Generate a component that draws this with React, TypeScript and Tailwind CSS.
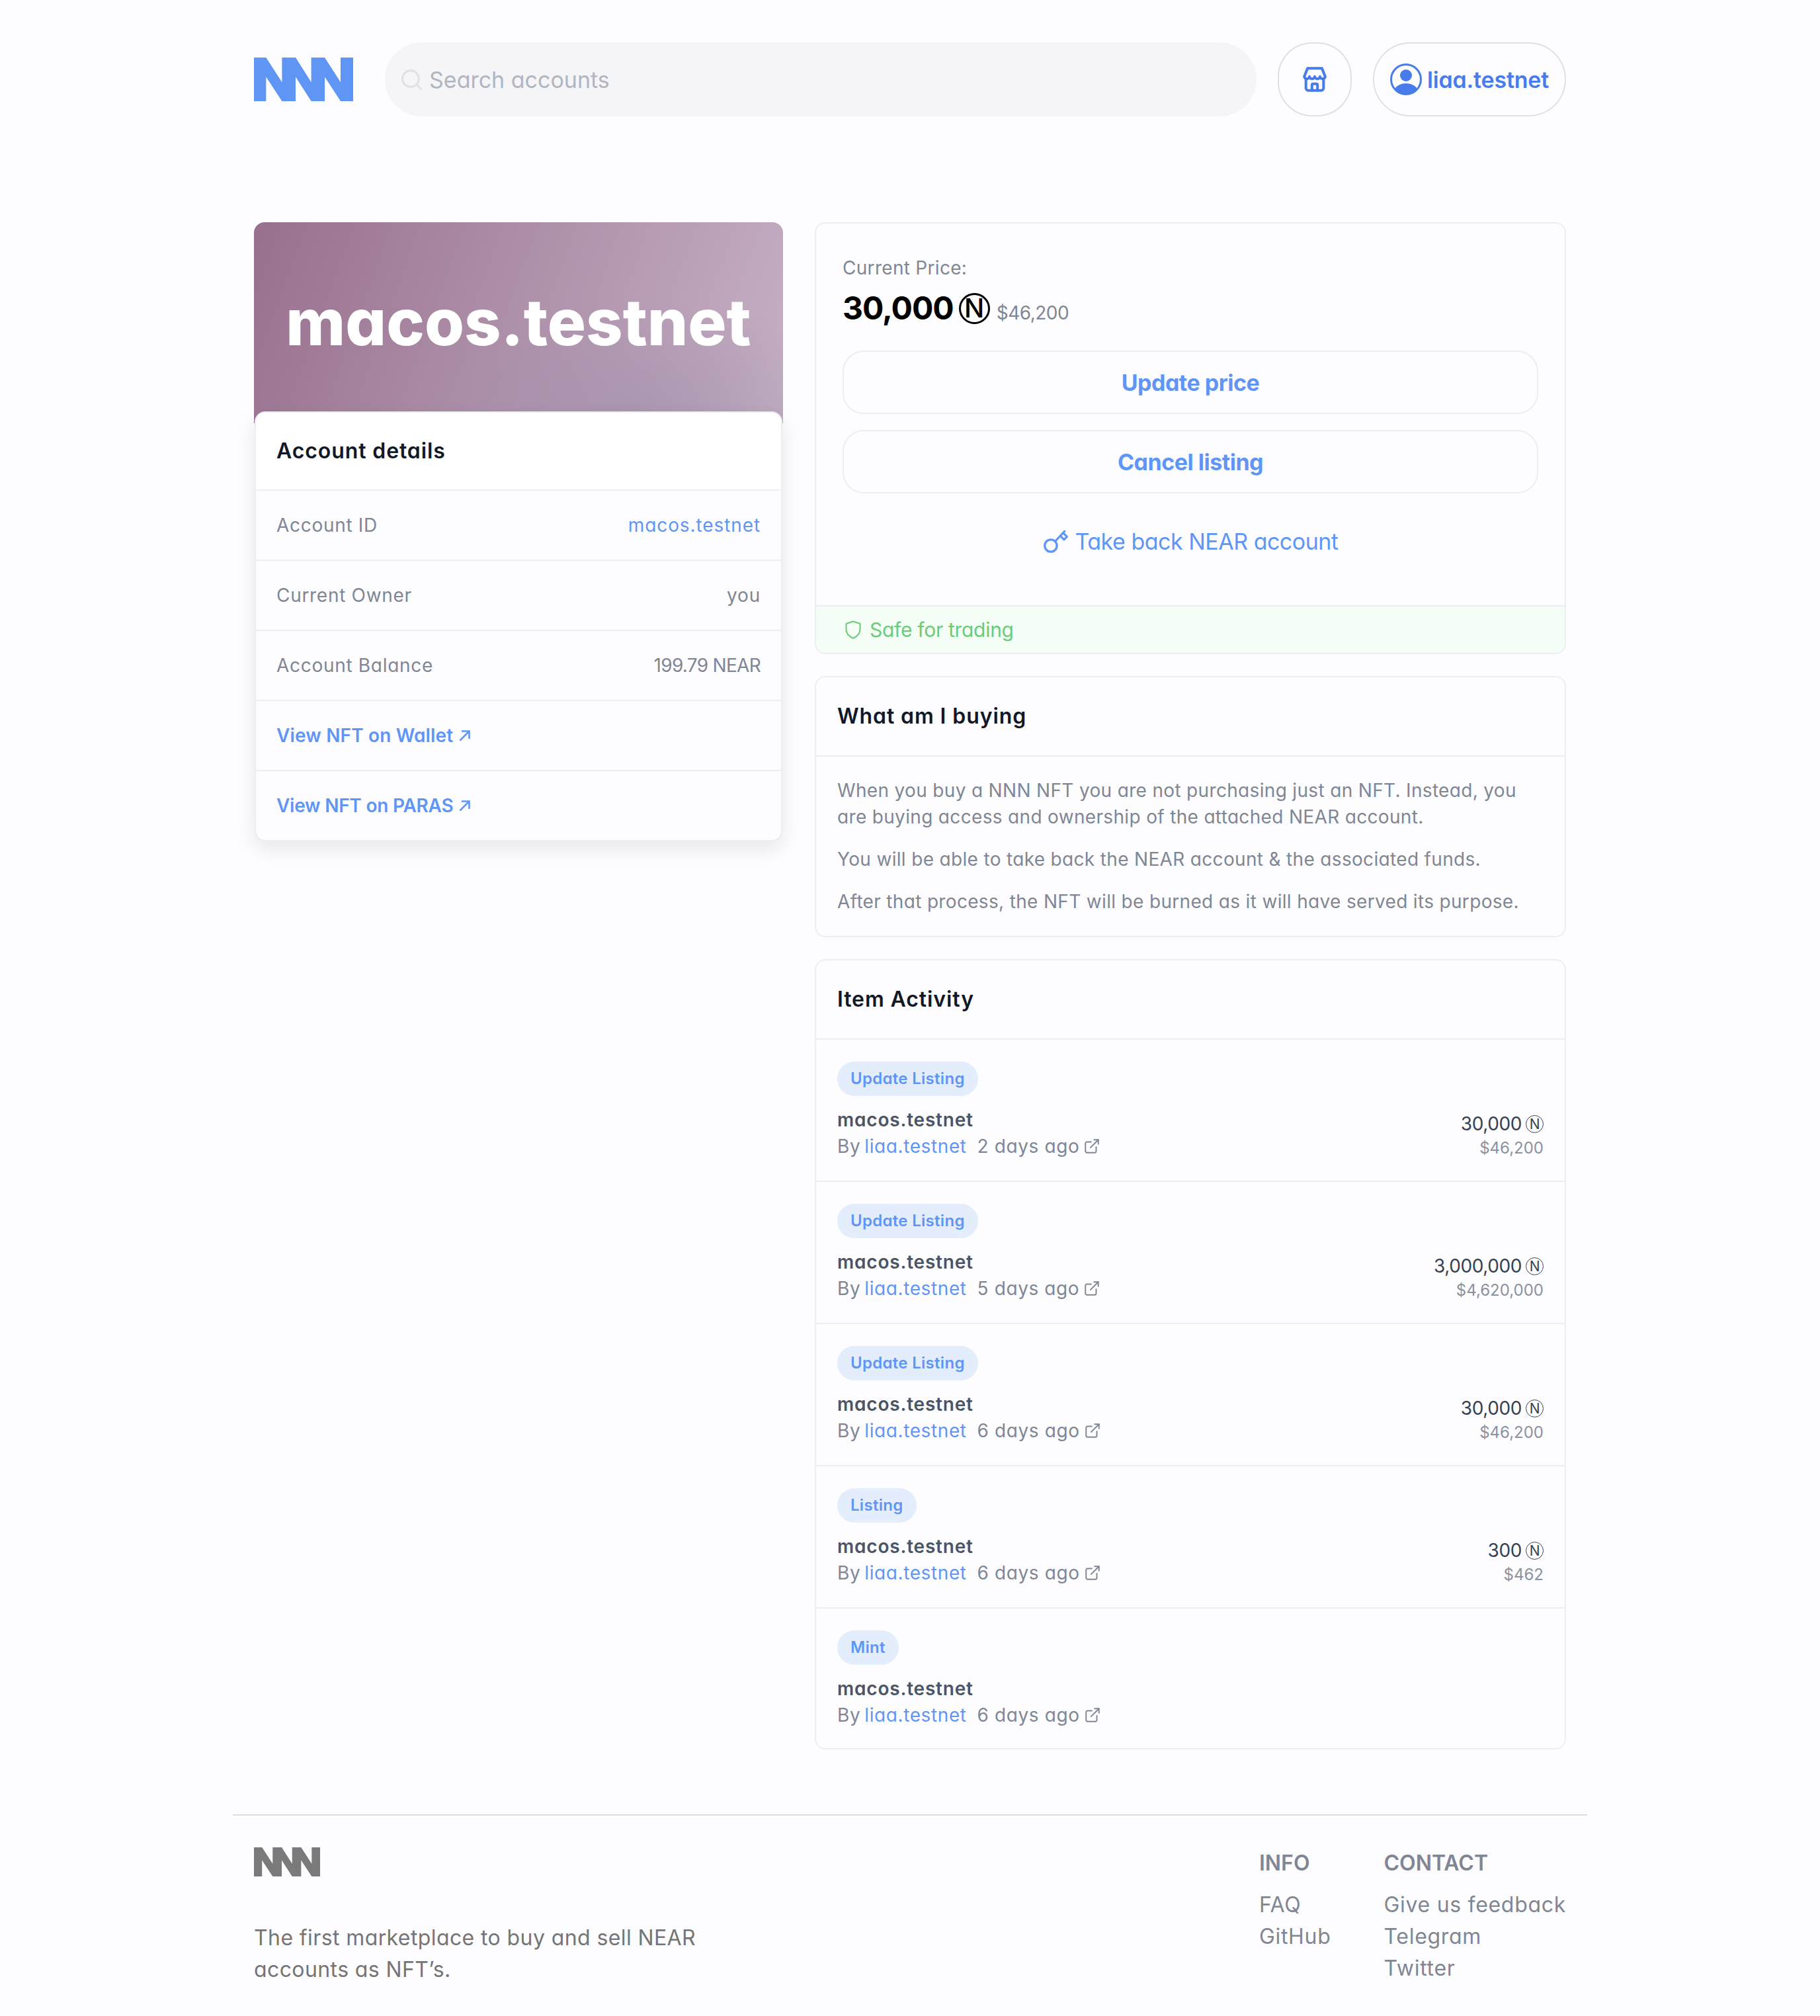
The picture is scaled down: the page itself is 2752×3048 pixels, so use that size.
import React from "react";
import { ExternalLink, Search } from "lucide-react";

type Activity = {
  label: string;
  ago: string;
  price?: string;
  usd?: string;
};

const ACTIVITY: Activity[] = [
  { label: "Update Listing", ago: "2 days ago", price: "30,000", usd: "$46,200" },
  { label: "Update Listing", ago: "5 days ago", price: "3,000,000", usd: "$4,620,000" },
  { label: "Update Listing", ago: "6 days ago", price: "30,000", usd: "$46,200" },
  { label: "Listing", ago: "6 days ago", price: "300", usd: "$462" },
  { label: "Mint", ago: "6 days ago" },
];

const DETAILS = [
  { label: "Account ID", value: "macos.testnet", valueClass: "text-[#5f96f5] tracking-[0.9px]" },
  { label: "Current Owner", value: "you", valueClass: "tracking-[0.8px]" },
  { label: "Account Balance", value: "199.79 NEAR", valueClass: "tracking-[-0.7px]" },
];

function Logo({ className }: { className: string }) {
  return (
    <svg viewBox="0 0 150 66" preserveAspectRatio="none" className={className}>
      <path
        fill="currentColor"
        d="M0 0H18.3L42.4 37.3V0H63L86.6 37.3V0H107L131 37.3V0H150V66H131L107 29.3V66H86.6L63 29.3V66H42.4L18.3 29.3V66H0Z"
      />
    </svg>
  );
}

function StoreIcon() {
  return (
    <svg viewBox="0 0 24 24" fill="none" stroke="#477cea" strokeWidth="2.4" strokeLinecap="round" strokeLinejoin="round" className="w-10 h-10">
      <path d="M5.5 2h13l3 7.5a2.4 2.4 0 0 1-4.75 0a2.4 2.4 0 0 1-4.75 0a2.4 2.4 0 0 1-4.75 0a2.4 2.4 0 0 1-4.75 0z" />
      <path d="M4 12v8a2 2 0 0 0 2 2h12a2 2 0 0 0 2-2v-8" />
      <path d="M9.5 22v-5a1 1 0 0 1 1-1h3a1 1 0 0 1 1 1v5" />
    </svg>
  );
}

function AvatarIcon() {
  return (
    <svg viewBox="0 0 48 48" className="w-12 h-12 shrink-0">
      <circle cx="24" cy="24" r="22.5" fill="none" stroke="#477cea" strokeWidth="3" />
      <circle cx="24" cy="18" r="9" fill="#477cea" />
      <path fill="#477cea" d="M7 38.5C10 33 17 30 24 30s14 3 17 8.5A22 22 0 0 1 7 38.5z" />
    </svg>
  );
}

function KeyIcon() {
  return (
    <svg viewBox="0 0 36 36" fill="none" stroke="#5f96f5" strokeWidth="3" strokeLinejoin="round" className="w-[39px] h-[39px] shrink-0">
      <circle cx="11" cy="24" r="8.5" />
      <path d="M17 18L31 3" />
      <path d="M24.5 10.5l5 5l4-4l-5-5" />
    </svg>
  );
}

function ShieldIcon() {
  return (
    <svg viewBox="0 0 24 28" fill="none" stroke="#6bcb77" strokeWidth="2" strokeLinejoin="round" className="w-6 h-7 shrink-0">
      <path d="M12 1.5L22.5 5V14C22.5 20 17 25 12 27C7 25 1.5 20 1.5 14V5Z" />
    </svg>
  );
}

function ArrowIcon() {
  return (
    <svg viewBox="0 0 18 18" fill="none" stroke="currentColor" strokeWidth="2.6" className="ml-[9px] w-[18px] h-[18px] shrink-0">
      <path d="M1.5 16.5L15.5 2.5M4 2.5h11.5V14" />
    </svg>
  );
}

function Panel({ children }: { children: React.ReactNode }) {
  return <section className="border-2 border-[#eceef1] rounded-2xl overflow-hidden">{children}</section>;
}

function PanelTitle({ children }: { children: React.ReactNode }) {
  return (
    <div className="h-[120px] border-b-2 border-[#eceef1] px-8 flex items-center text-[32px] font-semibold tracking-[0.9px] text-[#111827]">
      {children}
    </div>
  );
}

function ActivityRow({ item }: { item: Activity }) {
  return (
    <li className="h-[215px] last:h-[211px] border-b-2 last:border-b-0 border-[#eceef1] px-8 pt-[33px] flex justify-between">
      <div>
        <span className="inline-flex h-[52px] items-center rounded-full bg-[#e4edfc] px-5 text-[24px] font-semibold tracking-[0.3px] text-[#5f96f5]">
          {item.label}
        </span>
        <div className="mt-4 text-[28px] leading-10 font-semibold tracking-[0.8px] text-[#4b5563]">macos.testnet</div>
        <div className="flex items-center text-[28px] leading-10 tracking-[0.6px] text-[#7f8694]">
          <span>By</span>
          <span className="ml-[6px] text-[#5f96f5]">liaa.testnet</span>
          <span className="ml-4">{item.ago}</span>
          <ExternalLink size={26} strokeWidth={1.8} className="ml-[6px]" />
        </div>
      </div>
      {item.price && (
        <div className="mt-[74px] flex flex-col items-end">
          <div className="flex items-center gap-[6px] text-[28px] leading-10 tracking-[-0.4px] text-[#374151]">
            {item.price}
            <span className="flex h-[27px] w-[27px] items-center justify-center rounded-full border border-[#374151] text-[21px] leading-none">N</span>
          </div>
          <div className="text-[24px] leading-[34px] text-[#8b919f]">{item.usd}</div>
        </div>
      )}
    </li>
  );
}

export default function App() {
  return (
    <div className="min-h-[3048px] bg-[#fdfdff] [font-family:Inter,sans-serif] [font-feature-settings:'cv11']">
      <div className="mx-auto w-[2048px]">
        <div className="px-8">
          <header className="pt-16 flex items-center">
            <Logo className="w-[150px] h-[66px] text-[#5f96f5] shrink-0" />
            <div className="ml-12 h-[112px] flex-1 rounded-[56px] bg-[#f5f5f7] flex items-center pl-[22px] text-[34px] text-[#b0b5c0]">
              <Search size={37} strokeWidth={2} className="text-[#dfe1e6]" />
              <span className="ml-2">Search accounts</span>
            </div>
            <button className="ml-8 h-[112px] w-[112px] rounded-[52px] border-2 border-[#dfe0e6] flex items-center justify-center">
              <StoreIcon />
            </button>
            <button className="ml-8 h-[112px] w-[292px] rounded-[56px] border-2 border-[#dfe0e6] flex items-center pl-6 gap-2 text-[34px] font-semibold tracking-[-0.2px] text-[#477cea]">
              <AvatarIcon />
              liaa.testnet
            </button>
          </header>

          <main className="mt-40 grid grid-cols-[800px_1fr] gap-12 items-start">
            <div>
              <div className="h-[304px] rounded-t-2xl bg-[radial-gradient(ellipse_at_72%_100%,rgba(155,140,170,0.55),transparent_45%),linear-gradient(110deg,#98708f,#c6b1c5)] flex items-center justify-center pb-1">
                <h1 className="text-[97px] leading-none font-extrabold text-white">macos.testnet</h1>
              </div>
              <div className="relative -mt-[18px] mx-px border-2 border-[#eceef1] rounded-2xl bg-[#fdfdff] shadow-[0_12px_30px_rgba(0,0,0,0.09)] overflow-hidden">
                <div className="h-[118px] bg-white border-b-2 border-[#eceef1] px-[31px] flex items-center text-[32px] font-semibold tracking-[0.9px] text-[#111827]">
                  Account details
                </div>
                {DETAILS.map((row) => (
                  <div key={row.label} className="h-[106px] border-b-2 border-[#eceef1] px-[31px] flex items-center justify-between text-[28px] tracking-[0.7px] text-[#7f8694]">
                    <span>{row.label}</span>
                    <span className={row.valueClass}>{row.value}</span>
                  </div>
                ))}
                <div className="h-[106px] border-b-2 border-[#eceef1] px-[31px] flex items-center text-[28px] font-semibold tracking-[0.15px] text-[#5f96f5]">
                  View NFT on Wallet
                  <ArrowIcon />
                </div>
                <div className="h-[104px] px-[31px] flex items-center text-[28px] font-semibold tracking-[-0.25px] text-[#5f96f5]">
                  View NFT on PARAS
                  <ArrowIcon />
                </div>
              </div>
            </div>

            <div className="flex flex-col gap-[33px]">
              <Panel>
                <div className="px-10 pt-[47px] pb-[73px]">
                  <div className="text-[28px] leading-10 tracking-[0.3px] text-[#7f8694]">Current Price:</div>
                  <div className="mt-[13px] h-14 flex items-center">
                    <span className="text-[48px] font-bold tracking-[-1px] text-black">30,000</span>
                    <span className="ml-2 flex h-[47px] w-[47px] items-center justify-center rounded-full border-[3px] border-black text-[40px] font-medium leading-none text-black">N</span>
                    <span className="ml-[10px] mt-[14px] text-[28px] tracking-[-0.5px] text-[#7f8694]">$46,200</span>
                  </div>
                  <button className="mt-[36px] w-full h-24 rounded-[32px] border-2 border-[#eceef1] text-[34px] font-bold tracking-[-0.5px] text-[#5f96f5]">
                    Update price
                  </button>
                  <button className="mt-6 w-full h-24 rounded-[32px] border-2 border-[#eceef1] text-[34px] font-bold tracking-[-0.5px] text-[#5f96f5]">
                    Cancel listing
                  </button>
                  <div className="mt-12 h-12 flex items-center justify-center gap-[10px] text-[34px] tracking-[-0.5px] text-[#5f96f5]">
                    <KeyIcon />
                    Take back NEAR account
                  </div>
                </div>
                <div className="h-[70px] border-t-2 border-[#eceef1] box-content bg-[#f5fdf7] pl-[44px] flex items-center gap-[13px] text-[30px] tracking-[-0.3px] text-[#6bcb77]">
                  <ShieldIcon />
                  Safe for trading
                </div>
              </Panel>

              <Panel>
                <PanelTitle>What am I buying</PanelTitle>
                <div className="px-8 pt-[31px] pb-8 flex flex-col gap-6 text-[28px] leading-10 tracking-[0.33px] text-[#7f8694]">
                  <p>
                    When you buy a NNN NFT you are not purchasing just an NFT. Instead, you
                    <br />
                    are buying access and ownership of the attached NEAR account.
                  </p>
                  <p>You will be able to take back the NEAR account &amp; the associated funds.</p>
                  <p>After that process, the NFT will be burned as it will have served its purpose.</p>
                </div>
              </Panel>

              <Panel>
                <PanelTitle>Item Activity</PanelTitle>
                <ul>
                  {ACTIVITY.map((item, i) => (
                    <ActivityRow key={i} item={item} />
                  ))}
                </ul>
              </Panel>
            </div>
          </main>
        </div>

        <footer className="mt-[98px] border-t-2 border-[#dcdde5] pt-12 px-8 flex justify-between">
          <div>
            <Logo className="w-[100px] h-[44px] text-[#7a7a7a]" />
            <p className="mt-[69px] text-[32px] leading-[48px] tracking-[0.4px] text-[#757575]">
              The first marketplace to buy and sell NEAR
              <br />
              accounts as NFT’s.
            </p>
          </div>
          <div className="flex gap-20 text-[32px] leading-[48px] tracking-[0.7px] text-[#7f8694]">
            <div>
              <div className="font-semibold tracking-normal mb-[15px]">INFO</div>
              <div>FAQ</div>
              <div>GitHub</div>
            </div>
            <div>
              <div className="font-semibold tracking-normal mb-[15px]">CONTACT</div>
              <div>Give us feedback</div>
              <div>Telegram</div>
              <div>Twitter</div>
            </div>
          </div>
        </footer>
      </div>
    </div>
  );
}
